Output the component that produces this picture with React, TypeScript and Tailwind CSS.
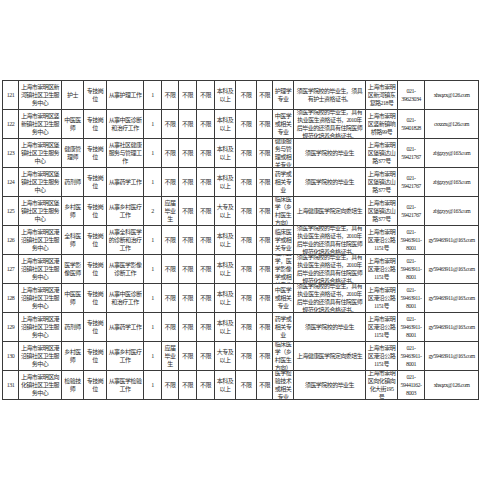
const cols = [16, 43, 22, 23, 37, 18, 17, 18, 18, 21, 21, 16, 21, 72, 32, 27, 54]

const LONG = '须医学院校的毕业生，具有执业医生资格证书，2010年后毕业的还须具有住院医师规范化培养合格证书。'
const GY = ['上海市崇明区港沿公路1151号', '021-59463911-8001', 'gy59463911@163.com']
const BZ = ['上海市崇明区堡镇达山路377号', '021-59421767', 'zbjgzyy@163.com']

const rows: string[][] = [
  ['121', '上海市崇明区新河镇社区卫生服务中心', '护士', '专技岗位', '从事护理工作', '1', '不限', '不限', '不限', '本科及以上', '不限', '不限', '护理学专业', '须医学院校的毕业生，须具有护士资格证书。', '上海市崇明区新河镇东复路218号', '021-39623034', 'xhsqzx@126.com'],
  ['122', '上海市崇明区竖新镇社区卫生服务中心', '中医医师', '专技岗位', '从事中医诊断和治疗工作', '1', '不限', '不限', '不限', '本科及以上', '不限', '不限', '中医学或相关专业', LONG, '上海市崇明区竖新镇响桥路99号', '021-59401828', 'csxzzx@126.com'],
  ['123', '上海市崇明区堡镇社区卫生服务中心', '健康管理师', '专技岗位', '从事社区健康服务与管理工作', '1', '不限', '不限', '不限', '本科及以上', '不限', '不限', '健康服务与管理或相关专业', '须医学院校的毕业生', ...BZ],
  ['124', '上海市崇明区堡镇社区卫生服务中心', '药剂师', '专技岗位', '从事药学工作', '1', '不限', '不限', '不限', '本科及以上', '不限', '不限', '药学或相关专业', '须医学院校的毕业生', ...BZ],
  ['125', '上海市崇明区堡镇社区卫生服务中心', '乡村医师', '专技岗位', '从事乡村医疗工作', '2', '应届毕业生', '不限', '不限', '大专及以上', '不限', '不限', '临床医学（乡村医生方向）', '上海健康医学院定向委培生', ...BZ],
  ['126', '上海市崇明区港沿镇社区卫生服务中心', '全科医师', '专技岗位', '从事全科医学的诊断和治疗工作', '1', '不限', '不限', '不限', '本科及以上', '不限', '不限', '临床医学或相关专业', LONG, ...GY],
  ['127', '上海市崇明区港沿镇社区卫生服务中心', '医学影像医师', '专技岗位', '从事医学影像诊断工作', '1', '不限', '不限', '不限', '本科及以上', '不限', '不限', '临床医学，医学影像学或相关专业', LONG, ...GY],
  ['128', '上海市崇明区港沿镇社区卫生服务中心', '中医医师', '专技岗位', '从事中医诊断和治疗工作', '1', '不限', '不限', '不限', '本科及以上', '不限', '不限', '中医学或相关专业', LONG, ...GY],
  ['129', '上海市崇明区港沿镇社区卫生服务中心', '药剂师', '专技岗位', '从事药学工作', '1', '不限', '不限', '不限', '本科及以上', '不限', '不限', '药学或相关专业', '须医学院校的毕业生', ...GY],
  ['130', '上海市崇明区港沿镇社区卫生服务中心', '乡村医师', '专技岗位', '从事乡村医疗工作', '1', '应届毕业生', '不限', '不限', '大专及以上', '不限', '不限', '临床医学（乡村医生方向）', '上海健康医学院定向委培生', ...GY],
  ['131', '上海市崇明区向化镇社区卫生服务中心', '检验技师', '专技岗位', '从事医学检验工作', '1', '不限', '不限', '不限', '本科及以上', '不限', '不限', '医学检验技术或相关专业', '须医学院校的毕业生', '上海市崇明区向化镇向化大街195号', '021-59441162-8003', 'xhsqzx@126.com'],
]

export default function App() {
  return (
    <div
      className="w-[480px] h-[480px] bg-white pt-[80px] px-[2px] text-[#2b2b2b]"
      style={{ fontFamily: '"Liberation Serif", "Noto Sans CJK SC", serif' }}
    >
      <table className="table-fixed border-collapse w-[476px]">
        <colgroup>
          {cols.map((w, i) => (
            <col key={i} style={{ width: w }} />
          ))}
        </colgroup>
        <tbody>
          {rows.map((row) => (
            <tr key={row[0]}>
              {row.map((cell, i) => (
                <td key={i} className="border border-[#3a3a3a] p-0 align-middle">
                  <div className="h-[28px] overflow-hidden flex items-center justify-center px-[1px]">
                    <div className="text-[6px] leading-[8px] tracking-[-0.55px] text-center [overflow-wrap:anywhere]">
                      {cell}
                    </div>
                  </div>
                </td>
              ))}
            </tr>
          ))}
        </tbody>
      </table>
    </div>
  )
}
